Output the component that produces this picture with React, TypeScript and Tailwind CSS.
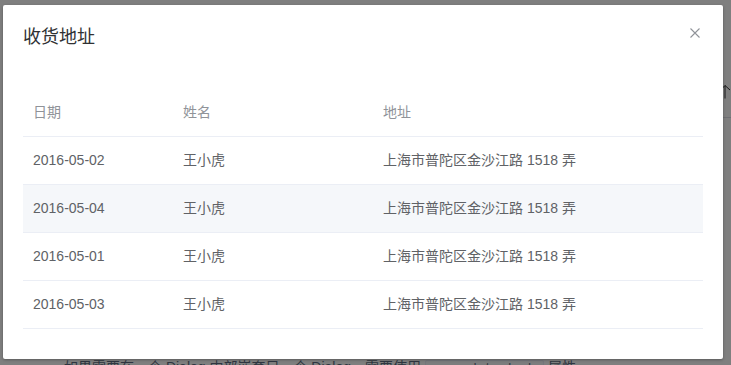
const ROWS = [
  { date: "2016-05-02", name: "王小虎", address: "上海市普陀区金沙江路 1518 弄" },
  { date: "2016-05-04", name: "王小虎", address: "上海市普陀区金沙江路 1518 弄" },
  { date: "2016-05-01", name: "王小虎", address: "上海市普陀区金沙江路 1518 弄" },
  { date: "2016-05-03", name: "王小虎", address: "上海市普陀区金沙江路 1518 弄" },
];

const FONT = "font-['Liberation_Sans','Noto_Sans_CJK_SC',sans-serif]";

const App = () => {
  return (
    <div className={`relative h-[365px] w-[731px] overflow-hidden bg-white ${FONT}`}>
      {/* page behind the overlay */}
      <div className="flex h-full">
        <div className="flex-1 pl-[64px] pt-[357px]">
          <p className="text-[14px] leading-[20px] text-[#5e6d82]">
            如果需要在一个 Dialog 内部嵌套另一个 Dialog，需要使用{" "}
            <code className="rounded-[2px] border border-[#eaeefb] bg-[#f9fafc] px-[4px] font-['Liberation_Mono',monospace] text-[13px]">
              append-to-body
            </code>{" "}
            属性。
          </p>
        </div>
        <div className="w-[8px] pt-[85px]">
          <svg width="8" height="14" viewBox="0 0 8 14" className="overflow-visible">
            <path d="M2 0.5V13.5M2 0.5L-2 4.5M2 0.5L7 5" stroke="#303133" strokeWidth="1" fill="none" />
          </svg>
          <div className="mt-[18px] h-px bg-[#dcdfe6]" />
        </div>
      </div>

      <div className="absolute inset-0 bg-black/50" />

      {/* dialog */}
      <div className="absolute left-[3px] top-[5px] w-[720px] rounded-[2px] bg-white shadow-[0_1px_3px_rgba(0,0,0,0.3)]">
        <div className="relative px-[20px] pb-[10px] pt-[20px]">
          <span className="block text-[18px] leading-[24px] text-[#303133]">收货地址</span>
          <button className="absolute right-[23px] top-[23px] flex h-[10px] w-[10px] items-center justify-center">
            <svg width="10" height="10" viewBox="0 0 10 10">
              <path d="M0.5 0.5L9.5 9.5M9.5 0.5L0.5 9.5" stroke="#909399" strokeWidth="1.1" fill="none" />
            </svg>
          </button>
        </div>
        <div className="px-[20px] py-[30px]">
          <table className="w-full table-fixed border-separate border-spacing-0 text-[14px] text-[#606266]">
            <colgroup>
              <col className="w-[150px]" />
              <col className="w-[200px]" />
              <col />
            </colgroup>
            <thead>
              <tr className="text-left text-[#909399]">
                <th className="border-b border-[#ebeef5] px-[10px] py-[12px] font-normal leading-[23px]">日期</th>
                <th className="border-b border-[#ebeef5] px-[10px] py-[12px] font-normal leading-[23px]">姓名</th>
                <th className="border-b border-[#ebeef5] px-[10px] py-[12px] font-normal leading-[23px]">地址</th>
              </tr>
            </thead>
            <tbody>
              {ROWS.map((row, i) => (
                <tr key={row.date} className={i === 1 ? "bg-[#f5f7fa]" : ""}>
                  <td className="border-b border-[#ebeef5] px-[10px] py-[12px] leading-[23px]">{row.date}</td>
                  <td className="border-b border-[#ebeef5] px-[10px] py-[12px] leading-[23px]">{row.name}</td>
                  <td className="border-b border-[#ebeef5] px-[10px] py-[12px] leading-[23px]">{row.address}</td>
                </tr>
              ))}
            </tbody>
          </table>
        </div>
      </div>
    </div>
  );
};

export default App;
